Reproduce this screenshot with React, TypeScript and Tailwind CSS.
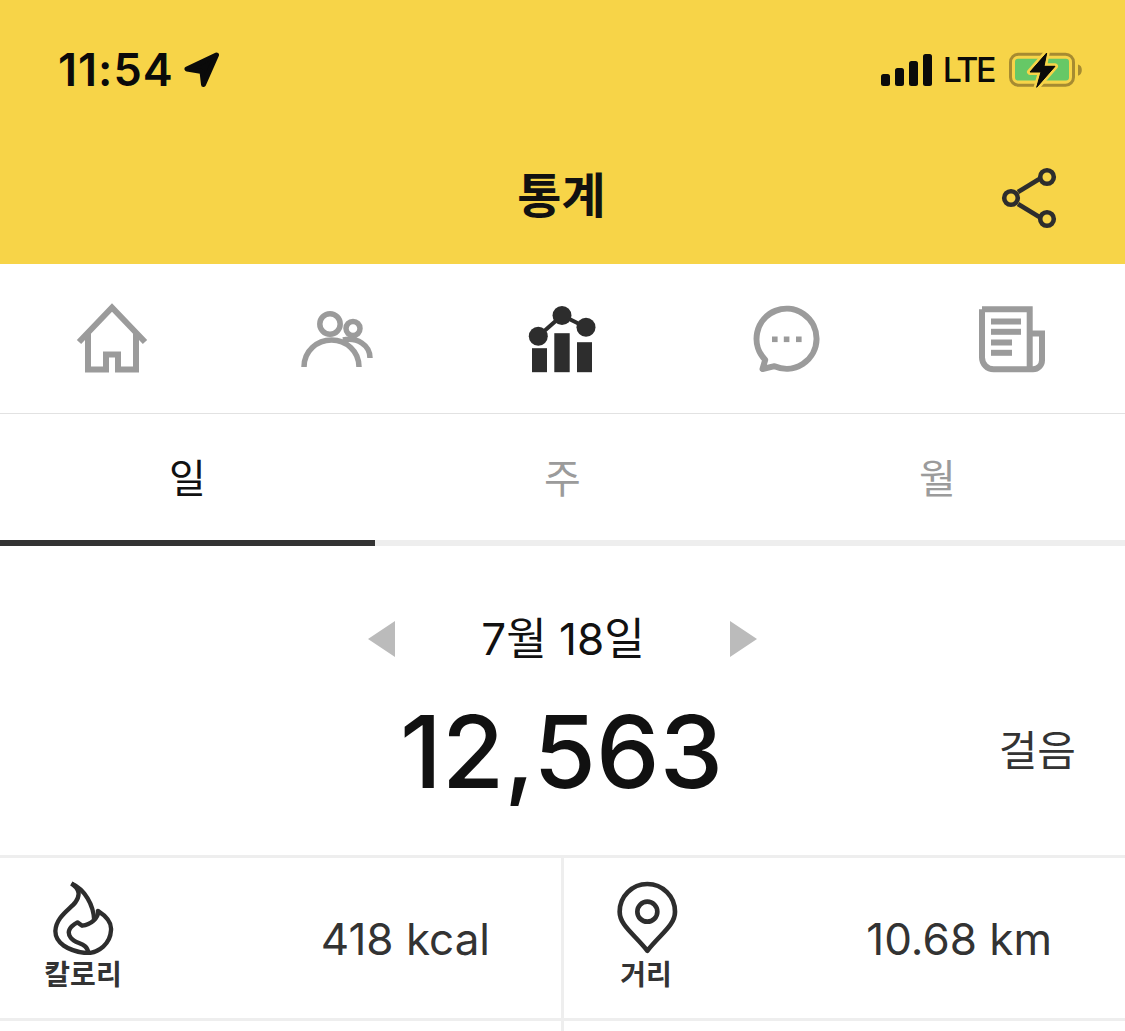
import React from 'react';

const NAV_GRAY = '#9b9b9b';
const DARK = '#2d2d2d';

const HomeIcon = () => (
  <svg width="80" height="80" viewBox="0 0 80 80" fill="none" stroke={NAV_GRAY} strokeWidth="6">
    <path d="M7 43 40 8.5 73 43" />
    <path d="M16 34V70.5H34V55.5H46V70.5H64V34" />
  </svg>
);

const PeopleIcon = () => (
  <svg width="80" height="80" viewBox="0 0 80 80" fill="none" stroke={NAV_GRAY} strokeWidth="5.5">
    <circle cx="33" cy="25" r="10.2" />
    <circle cx="56" cy="29.5" r="7" />
    <path d="M7 68C7 52 20 41 34.5 41C49 41 62 52 62 68" />
    <path d="M46 41C60 38 73 46 73 59" />
  </svg>
);

const StatsIcon = () => (
  <svg width="80" height="80" viewBox="0 0 80 80" fill={DARK}>
    <rect x="10" y="49.2" width="15" height="24" />
    <rect x="32.3" y="34.2" width="15.4" height="39" />
    <rect x="55" y="43.2" width="15" height="30" />
    <path d="M16.3 37.2 40 16.5 64 28.2" fill="none" stroke={DARK} strokeWidth="4" />
    <circle cx="16.3" cy="37.2" r="9.5" />
    <circle cx="40" cy="16.5" r="9.5" />
    <circle cx="64" cy="28.2" r="9.5" />
  </svg>
);

const ChatIcon = () => (
  <svg width="80" height="80" viewBox="0 0 80 80" fill="none">
    <path
      d="M27.5 67.2A30 30 0 1 0 18.2 60.8L15.5 70Z"
      stroke={NAV_GRAY}
      strokeWidth="6"
      strokeLinejoin="round"
    />
    <rect x="25" y="37.5" width="5.6" height="5.6" fill={NAV_GRAY} />
    <rect x="36.8" y="37.5" width="5.6" height="5.6" fill={NAV_GRAY} />
    <rect x="49" y="37.5" width="5.6" height="5.6" fill={NAV_GRAY} />
  </svg>
);

const NewsIcon = () => (
  <svg width="80" height="80" viewBox="0 0 80 80" fill="none" stroke={NAV_GRAY} strokeWidth="6">
    <path d="M10 10.2H57.7V70.2" />
    <path d="M10 10.2V58.5A11.7 11.7 0 0 0 21.7 70.2H61A9 9 0 0 0 70 61.2V34.5H58" />
    <path d="M19 22.5H49" />
    <path d="M19 32.8H49" />
    <path d="M19 43.5H40" />
    <path d="M19 53.8H40" />
  </svg>
);

const ShareIcon = () => (
  <svg width="60" height="66" viewBox="0 0 60 66" fill="none" stroke={DARK} strokeWidth="4.6">
    <path d="M18 27 41 13" />
    <path d="M18 39 41 53" />
    <circle cx="11" cy="33" r="6.8" />
    <circle cx="47" cy="12" r="6.8" />
    <circle cx="47" cy="54" r="6.8" />
  </svg>
);

const LocationArrow = () => (
  <svg width="36" height="36" viewBox="0 0 36 36" fill="#0a0a0a" stroke="#0a0a0a" strokeWidth="5" strokeLinejoin="round">
    <path d="M32.5 3 3 17 18 19.5 19.5 32.5Z" />
  </svg>
);

const SignalBars = () => (
  <div className="flex items-end gap-[5.3px]">
    <div className="w-[8.7px] h-[12.3px] rounded-[2.5px] bg-[#0a0a0a]"></div>
    <div className="w-[8.7px] h-[18.3px] rounded-[2.5px] bg-[#0a0a0a]"></div>
    <div className="w-[8.7px] h-[25px] rounded-[2.5px] bg-[#0a0a0a]"></div>
    <div className="w-[8.7px] h-[31.7px] rounded-[2.5px] bg-[#0a0a0a]"></div>
  </div>
);

const Battery = () => (
  <svg width="76" height="38" viewBox="0 0 76 38" fill="none">
    <rect x="1.5" y="3.2" width="63" height="31" rx="8" stroke="#a68b31" strokeWidth="3" />
    <rect x="6" y="7.8" width="54" height="21.7" rx="3" fill="#66c866" />
    <path d="M69 13.5C71.5 14 72.8 16 72.8 19C72.8 22 71.5 24 69 24.8Z" fill="#a68b31" />
    <path
      d="M37.7 2 21 21H32L27.7 36.3 46 15.3H35Z"
      fill="#0a0a0a"
      stroke="#f7d448"
      strokeWidth="6"
      strokeLinejoin="round"
      paintOrder="stroke"
    />
    <path d="M37.7 2 21 21H32L27.7 36.3 46 15.3H35Z" fill="#0a0a0a" stroke="#0a0a0a" strokeWidth="1" strokeLinejoin="round" />
  </svg>
);

const FlameIcon = () => (
  <svg width="62" height="74" viewBox="100 35 185 220" fill="none" stroke={DARK} strokeWidth="13" strokeLinejoin="round">
    <path d="M158 42C184 60 184 78 170 98C152 120 112 142 110 184C110 218 145 244 205 250C240 248 274 222 276 182C278 165 270 145 237 124C240 145 215 165 190 168L176 158C150 172 144 188 156 204C170 224 205 218 208 248" />
    <path d="M158 42C198 60 224 105 226 152" />
  </svg>
);

const PinIcon = () => (
  <svg width="65" height="74" viewBox="75 33 195 222" fill="none" stroke={DARK} strokeWidth="14" strokeLinejoin="round">
    <path d="M172 242C130 190 89 165 89 125A83 83 0 0 1 255 125C255 165 214 190 172 242Z" />
    <circle cx="172" cy="125" r="30" />
  </svg>
);

const navIcons = [HomeIcon, PeopleIcon, StatsIcon, ChatIcon, NewsIcon];

const App: React.FC = () => {
  return (
    <div className="w-[1125px] h-[1031px] overflow-hidden bg-white font-['Inter','Noto_Sans_CJK_KR',sans-serif]">
      <header className="bg-[#f7d448] h-[264px] flex flex-col">
        <div className="flex items-center justify-between pl-[58px] pr-[40px] pt-[48px] h-[92px]">
          <div className="flex items-center gap-[10px]">
            <span className="text-[45px] leading-[44px] font-semibold tracking-[1px] text-[#0a0a0a]">11:54</span>
            <LocationArrow />
          </div>
          <div className="flex items-center">
            <SignalBars />
            <span className="ml-[11px] mr-[15px] text-[34px] leading-[40px] font-medium tracking-[-2.5px] text-[#0a0a0a]">LTE</span>
            <Battery />
          </div>
        </div>
        <div className="relative flex-1 flex items-center justify-center">
          <h1 className="text-[48px] leading-[60px] font-bold text-[#111] mt-[36px] pr-[2px]">통계</h1>
          <div className="absolute right-[65px] top-[73px]">
            <ShareIcon />
          </div>
        </div>
      </header>

      <nav className="grid grid-cols-5 h-[150px] border-b border-[#e2e2e2]">
        {navIcons.map((Icon, idx) => (
          <div key={idx} className="flex items-center justify-center pr-[2px]">
            <Icon />
          </div>
        ))}
      </nav>

      <div className="grid grid-cols-3 h-[132px]">
        <div className="flex flex-col border-b-[6px] border-[#333]">
          <div className="flex-1 flex items-center justify-center pt-[4px] text-[40px] text-[#111]">일</div>
        </div>
        <div className="flex flex-col border-b-[6px] border-[#eee]">
          <div className="flex-1 flex items-center justify-center pt-[4px] text-[40px] text-[#9b9b9b]">주</div>
        </div>
        <div className="flex flex-col border-b-[6px] border-[#eee]">
          <div className="flex-1 flex items-center justify-center pt-[4px] text-[40px] text-[#9b9b9b]">월</div>
        </div>
      </div>

      <div className="flex items-center justify-center gap-[86px] pt-[64px] h-[122px]">
        <svg width="27" height="36" viewBox="0 0 27 36">
          <polygon points="27,0 0,18 27,36" fill="#bbbbbb" />
        </svg>
        <span className="text-[44px] leading-[56px] text-[#111]">7월 18일</span>
        <svg width="27" height="36" viewBox="0 0 27 36" className="-ml-[1px]">
          <polygon points="0,0 27,18 0,36" fill="#bbbbbb" />
        </svg>
      </div>

      <div className="grid grid-cols-[1fr_auto_1fr] items-center h-[187px] pb-[21px]">
        <div></div>
        <div className="text-[101px] leading-[120px] font-medium text-[#111] -ml-[2px]">12,563</div>
        <div className="flex justify-end pr-[49px] text-[42px] leading-[50px] text-[#333]">걸음</div>
      </div>

      <div className="border-y-[3px] border-[#eee] grid grid-cols-[561px_3px_1fr] h-[166px]">
        <div className="flex items-center justify-between pr-[71px]">
          <div className="flex flex-col items-center self-start w-[100px] ml-[33px] pt-[23px]">
            <FlameIcon />
            <span className="mt-[3px] text-[28px] leading-[34px] font-semibold text-[#333]">칼로리</span>
          </div>
          <span className="pt-[2px] text-[44px] leading-[56px] text-[#333]">418 kcal</span>
        </div>
        <div className="bg-[#eee]"></div>
        <div className="flex items-center justify-between pr-[73px]">
          <div className="flex flex-col items-center self-start w-[100px] ml-[33px] pt-[23px]">
            <PinIcon />
            <span className="mt-[3px] pr-[2px] text-[28px] leading-[34px] font-semibold text-[#333]">거리</span>
          </div>
          <span className="pt-[2px] text-[44px] leading-[56px] text-[#333]">10.68 km</span>
        </div>
      </div>
      <div className="grid grid-cols-[561px_3px_1fr] h-[20px]">
        <div></div>
        <div className="bg-[#eee]"></div>
        <div></div>
      </div>
    </div>
  );
};

export default App;
